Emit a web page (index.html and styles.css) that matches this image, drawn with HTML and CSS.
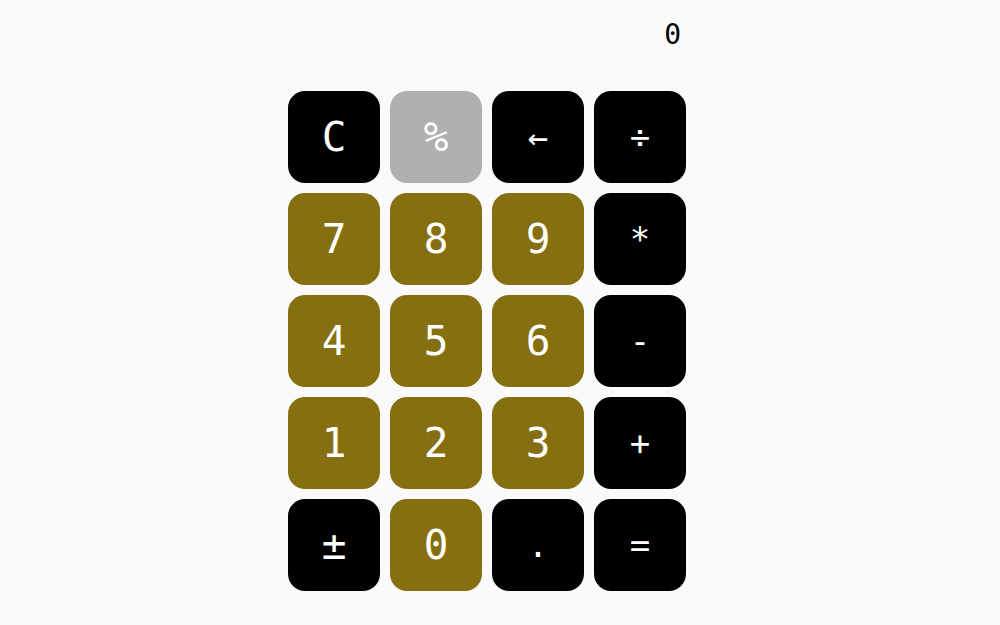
FILE: index.html
```html
<!DOCTYPE html>
<html>
<head>
<meta charset="utf-8">
<link rel="stylesheet" href="styles.css">
</head>
<body>
<div class="calc">
  <div class="display">0</div>
  <div class="keys">
    <button class="key dark">C</button>
    <button class="key gray">%</button>
    <button class="key dark small">←</button>
    <button class="key dark small">÷</button>
    <button class="key olive">7</button>
    <button class="key olive">8</button>
    <button class="key olive">9</button>
    <button class="key dark small">*</button>
    <button class="key olive">4</button>
    <button class="key olive">5</button>
    <button class="key olive">6</button>
    <button class="key dark small">-</button>
    <button class="key olive">1</button>
    <button class="key olive">2</button>
    <button class="key olive">3</button>
    <button class="key dark small">+</button>
    <button class="key dark">±</button>
    <button class="key olive">0</button>
    <button class="key dark small">.</button>
    <button class="key dark small">=</button>
  </div>
</div>
</body>
</html>
```
FILE: styles.css
```css
html, body {
  margin: 0;
  padding: 0;
  background: #fafafa;
  height: 100%;
}
.calc {
  width: 398px;
  margin-left: 288px;
  padding-top: 16px;
  font-family: "DejaVu Sans Mono", monospace;
  font-feature-settings: "zero" 1;
  font-variant-numeric: slashed-zero;
}
.display {
  text-align: right;
  padding-right: 5px;
  font-size: 28px;
  line-height: 37px;
  height: 37px;
  color: #000;
  margin-bottom: 38px;
}
.keys {
  display: grid;
  grid-template-columns: repeat(4, 92px);
  grid-auto-rows: 92px;
  gap: 10px;
}
.key {
  border: none;
  border-radius: 17px;
  color: #fff;
  font-family: "DejaVu Sans Mono", monospace;
  font-feature-settings: "zero" 1;
  font-variant-numeric: slashed-zero;
  font-size: 41px;
  display: flex;
  align-items: center;
  justify-content: center;
  padding: 0;
}
.key.small { font-size: 34px; }
.dark { background: #000; }
.gray { background: #b0b0b0; }
.olive { background: #866f10; }
```
